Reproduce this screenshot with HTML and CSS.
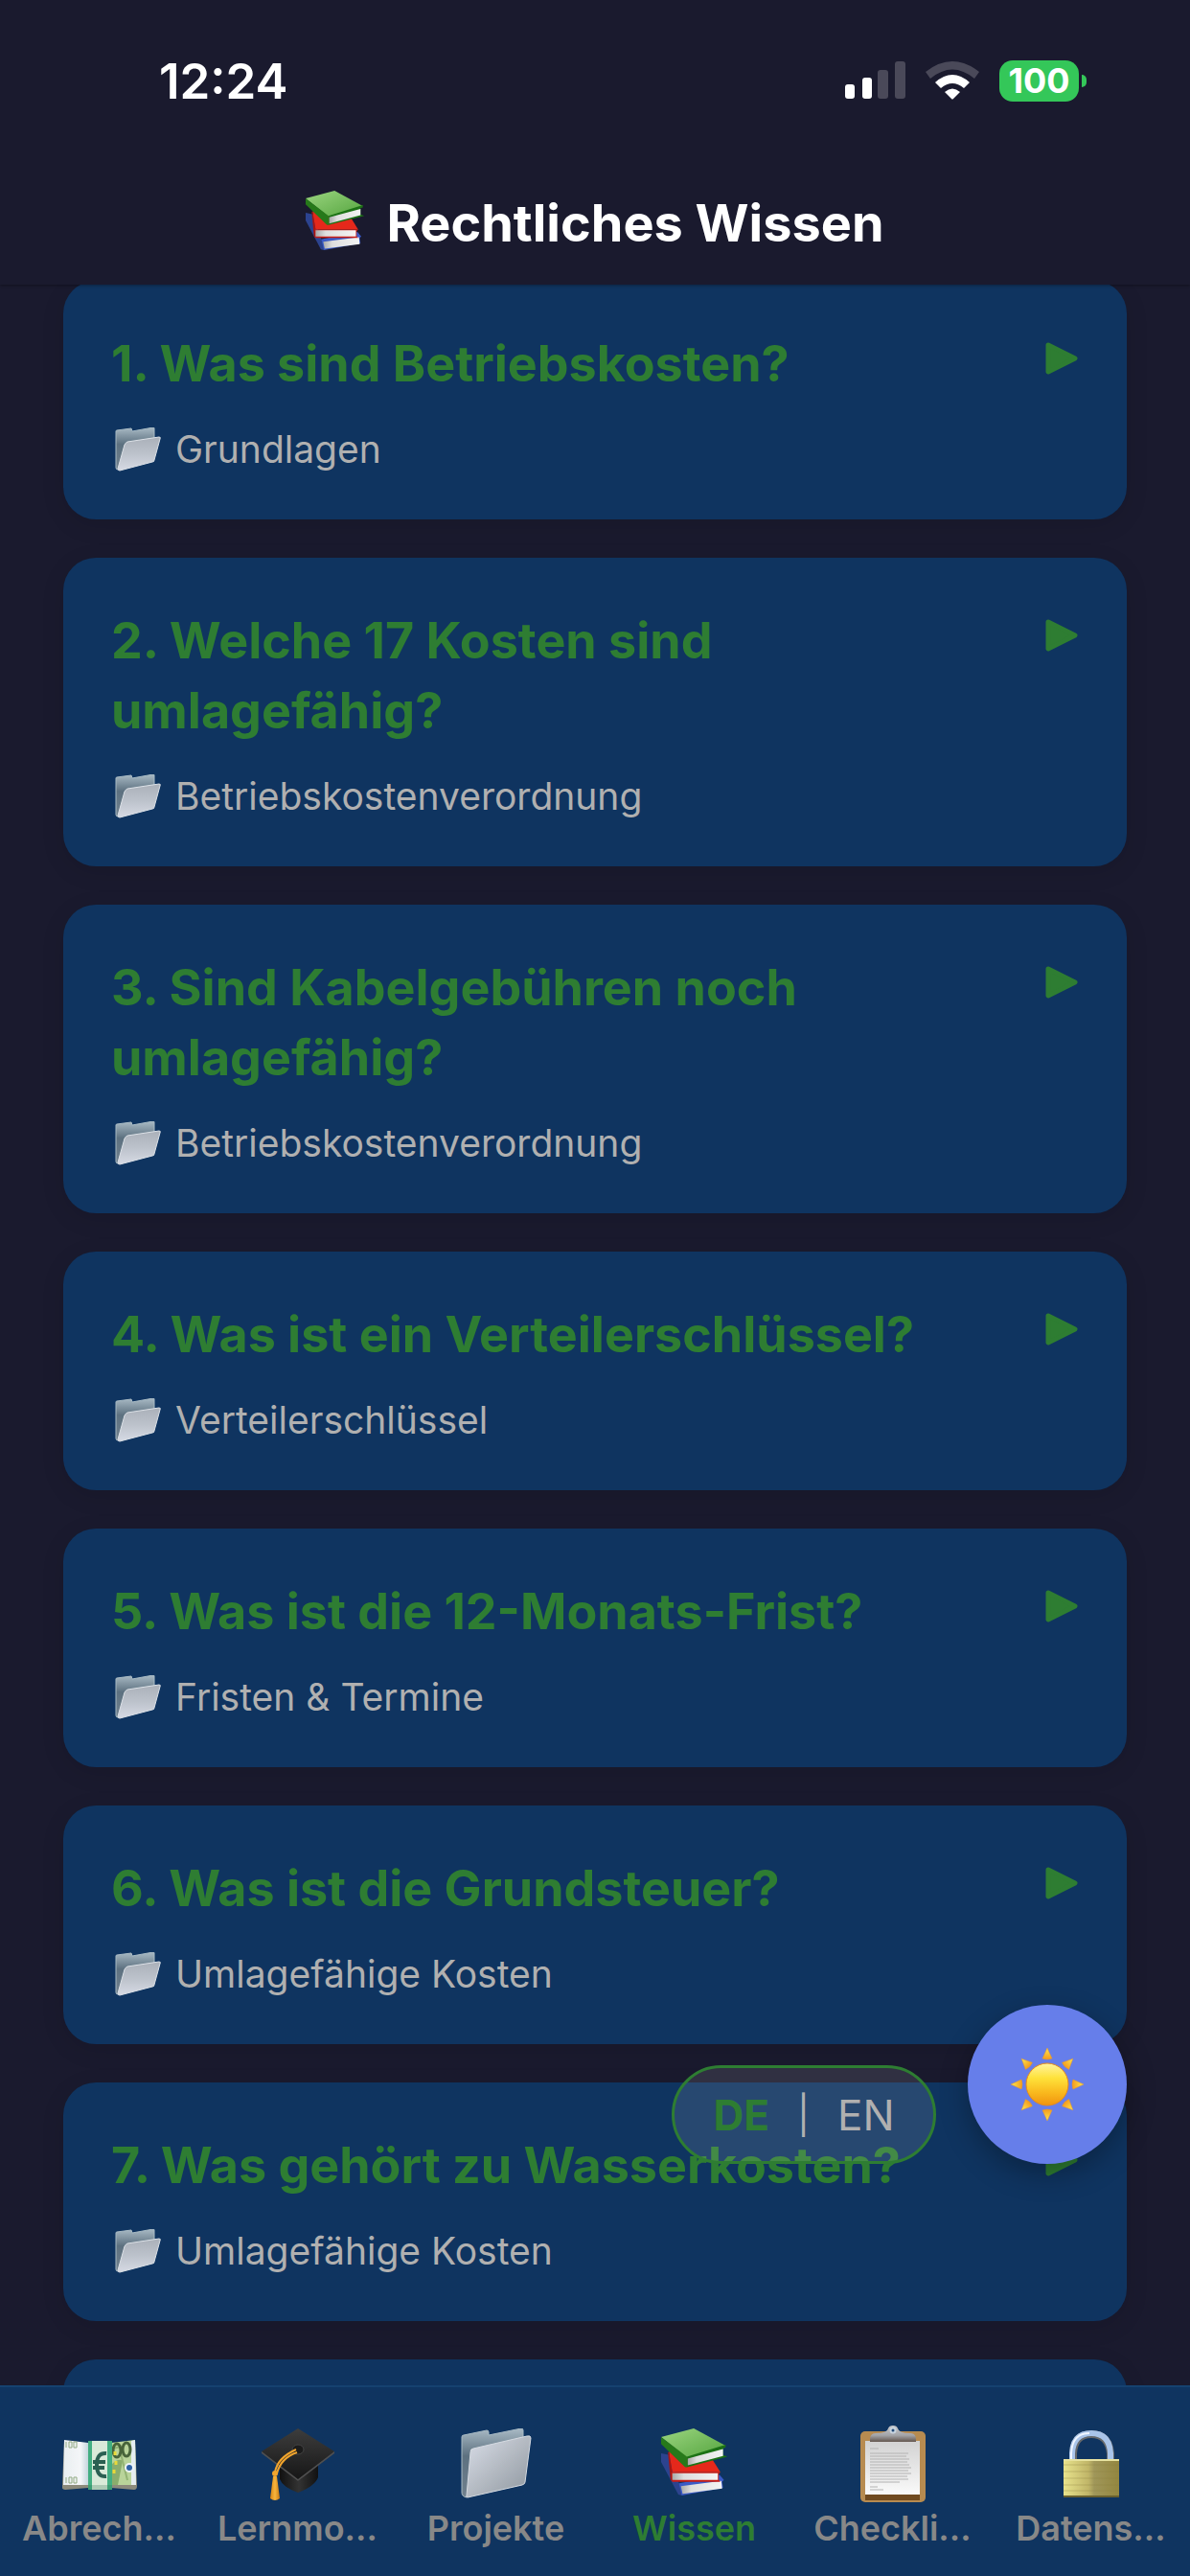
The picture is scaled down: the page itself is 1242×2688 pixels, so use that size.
FILE: index.html
```html
<!DOCTYPE html>
<html lang="de">
<head>
<meta charset="utf-8">
<meta name="viewport" content="width=device-width, initial-scale=1">
<title>Rechtliches Wissen</title>
<link rel="stylesheet" href="styles.css">
</head>
<body>
<svg class="sprite" width="0" height="0" aria-hidden="true">
  <defs>
    <linearGradient id="g-green" x1="0" y1="0" x2="1" y2="1"><stop offset="0" stop-color="#9bd580"/><stop offset="1" stop-color="#55a53f"/></linearGradient>
    <linearGradient id="g-page" x1="0" y1="0" x2="1" y2="0"><stop offset="0" stop-color="#a9a9a9"/><stop offset=".25" stop-color="#dedede"/><stop offset="1" stop-color="#f4f4f4"/></linearGradient>
    <linearGradient id="g-front" x1="0" y1="0" x2="1" y2="1"><stop offset="0" stop-color="#d9dee9"/><stop offset=".5" stop-color="#b4bac2"/><stop offset="1" stop-color="#8d969f"/></linearGradient>
    <linearGradient id="g-open" x1="0" y1="0" x2="0" y2="1"><stop offset="0" stop-color="#aab0b9"/><stop offset=".5" stop-color="#bcc2cb"/><stop offset="1" stop-color="#d6dae4"/></linearGradient>
    <linearGradient id="g-back" x1="0" y1="0" x2="0" y2="1"><stop offset="0" stop-color="#a9bac5"/><stop offset=".4" stop-color="#5d7180"/><stop offset="1" stop-color="#71818e"/></linearGradient>
    <linearGradient id="g-sun" x1="0" y1="0" x2="0" y2="1"><stop offset="0" stop-color="#fff3a0"/><stop offset=".35" stop-color="#fee23a"/><stop offset=".7" stop-color="#f9b81d"/><stop offset="1" stop-color="#f0930f"/></linearGradient>
    <linearGradient id="g-ray" x1="0" y1="0" x2="0" y2="1"><stop offset="0" stop-color="#ffe94e"/><stop offset="1" stop-color="#f39a1d"/></linearGradient>
    <linearGradient id="g-cap" x1="0" y1="0" x2="0" y2="1"><stop offset="0" stop-color="#3d3d3d"/><stop offset="1" stop-color="#151515"/></linearGradient>
    <linearGradient id="g-base" x1="0" y1="0" x2="1" y2="0"><stop offset="0" stop-color="#111"/><stop offset=".5" stop-color="#333"/><stop offset="1" stop-color="#111"/></linearGradient>
    <linearGradient id="g-tassel" x1="0" y1="0" x2="1" y2="0"><stop offset="0" stop-color="#d98512"/><stop offset=".5" stop-color="#f7b53e"/><stop offset="1" stop-color="#c9780e"/></linearGradient>
    <linearGradient id="g-brass" x1="0" y1="0" x2="1" y2="0"><stop offset="0" stop-color="#e8e38c"/><stop offset=".45" stop-color="#c0b568"/><stop offset=".55" stop-color="#a0975a"/><stop offset="1" stop-color="#93863f"/></linearGradient>
    <linearGradient id="g-paper" x1="0" y1="0" x2="0" y2="1"><stop offset="0" stop-color="#d2d2d2"/><stop offset="1" stop-color="#fafafa"/></linearGradient>
    <linearGradient id="g-clip" x1="0" y1="0" x2="0" y2="1"><stop offset="0" stop-color="#c8cace"/><stop offset=".6" stop-color="#a3a4a8"/><stop offset="1" stop-color="#64564e"/></linearGradient>
    <linearGradient id="g-notes" x1="0" y1="0" x2="1" y2="0"><stop offset="0" stop-color="#e9eef0"/><stop offset=".7" stop-color="#f4f6f8"/><stop offset="1" stop-color="#c5d6dd"/></linearGradient>

    <symbol id="books" viewBox="0 0 78 78">
      <path d="M20 64l48-10 5 6-2 2 1 7-48 9-3-3z" fill="#3a5ac6"/>
      <path d="M0 29l10 2 11 34 3 13-4-1L0 39z" fill="#2c438f"/>
      <path d="M23 67l47-6 1 9-46 6z" fill="url(#g-page)"/>
      <path d="M9 27l50 8 10 16H13z" fill="#e5281b"/>
      <path d="M9 27l4 23v12l-2-2-3-32z" fill="#a81511"/>
      <path d="M12 51h57l-2 2v7l2 2H13z" fill="#c91c14"/>
      <path d="M13 52h53v8H13z" fill="url(#g-page)"/>
      <path d="M0 10L38 0l37 20-45 14z" fill="url(#g-green)"/>
      <path d="M0 10l30 23v12l-2 0L0 18z" fill="#26791a"/>
      <path d="M30 33l45-14v3l-3 1v8l5 2-47 12z" fill="#1c7215"/>
      <path d="M31 35l41-11v8L31 43z" fill="url(#g-page)"/>
    </symbol>
    <symbol id="folder-open" viewBox="0 0 48 46">
      <path d="M1 4Q1 3 2 3L17 1l1 3L40 0q1 0 1 1v28L3 44q-2 0-2-2z" fill="url(#g-back)" stroke="#a8bac4" stroke-width="1"/>
      <path d="M10 18q1-2 3-3l33-5q2 0 1 2l-6 22q0 2-2 2L5 45q-2 0-2-2z" fill="url(#g-open)" stroke="#dce1e7" stroke-width="1"/>
    </symbol>
    <symbol id="folder" viewBox="0 0 74 74">
      <path d="M1 9q0-2 2-2l24-5q2 0 2 2v3l34-7q2 0 2 2v8L6 72q-5-1-5-5z" fill="url(#g-back)" stroke="#a8bac4" stroke-width="1"/>
      <path d="M10 25q0-4 3-4L69 8q4-1 4 2l-6 46q0 2-3 3L7 72q-2 0-1-2z" fill="url(#g-front)" stroke="#d5dae1" stroke-width="1"/>
    </symbol>
    <symbol id="money" viewBox="0 0 78 54">
      <path d="M2 2l25 3h24l25-3 2 47q0 4-3 4l-24-2H27L3 53q-4 0-3-4z" fill="#8c8b7c"/>
      <path d="M2 1l25 3v44L1 48z" fill="url(#g-notes)"/>
      <path d="M51 4l25-3 1 47-26 0z" fill="#b9d49a"/>
      <path d="M72 2l4-1 1 47-5 0z" fill="#e5edf1"/>
      <path d="M51 27q8-8 12-4l-5 25h-7z" fill="#8aad6d"/>
      <path d="M53 10l8-2M61 15l7 28" stroke="#93b374" stroke-width="2"/>
      <ellipse cx="57" cy="12" rx="4" ry="7" fill="none" stroke="#48643a" stroke-width="3"/>
      <ellipse cx="67" cy="11" rx="4" ry="7" fill="none" stroke="#48643a" stroke-width="3"/>
      <circle cx="70" cy="30" r="5" fill="#edf3f7"/><circle cx="70" cy="30" r="3" fill="#2e62a5"/>
      <path d="M55 13v4M56 23v4M54 32v4" stroke="#e8d93a" stroke-width="3"/>
      <path d="M4 3v6M7 3h3v6H7zM12 3h3v6h-3zM4 40v6M7 40h3v6H7zM12 40h3v6h-3z" fill="none" stroke="#91aa83" stroke-width="1"/>
      <path d="M27 2h25v51H27z" fill="#43ae82"/><path d="M31 2h16v51H31z" fill="#d9ead9"/><path d="M27 48h25v5H27z" fill="#276b4a" opacity=".25"/>
      <path d="M46 15q-10-1-10 12t10 12M32 24h13M32 30h12" fill="none" stroke="#2b6052" stroke-width="4"/>
    </symbol>
    <symbol id="cap" viewBox="0 0 78 78">
      <path d="M20 40l19 15 21-16v13q-3 9-21 16-16-6-19-14z" fill="url(#g-base)"/>
      <path d="M39 1l38 24-38 31L1 25z" fill="url(#g-cap)"/>
      <path d="M1 25l38 29 38-29v2L39 56 1 27z" fill="#505050"/>
      <ellipse cx="39" cy="23" rx="6" ry="5" fill="#1b1b1b" stroke="#444"/>
      <path d="M37 23Q17 32 15 47M38 26Q21 32 17 48" fill="none" stroke="#f2a52d" stroke-width="2"/>
      <circle cx="15" cy="48" r="3" fill="#f2a52d"/>
      <path d="M13 51h4l3 23q-5 4-10 0z" fill="url(#g-tassel)"/>
    </symbol>
    <symbol id="clipboard" viewBox="0 0 68 80">
      <rect x="0" y="6" width="68" height="74" rx="5" fill="#b78b50"/>
      <path d="M5 68h57v10H5z" fill="#704a20"/>
      <path d="M5 16h57v56H5z" fill="url(#g-paper)"/>
      <path d="M10 24h9M10 29h40M10 32h38M10 35h41M10 38h39M10 41h41M10 44h43M10 47h40M10 50h43M10 53h39M10 56h40M10 59h31M10 64h8M10 67h14" stroke="#b2b2b2" stroke-width="1"/>
      <path d="M10 15q0-7 6-7 12 0 13-5 1-3 5-3t5 3q1 5 13 5 6 0 6 7v2H10z" fill="url(#g-clip)"/>
      <circle cx="34" cy="5" r="2.500" fill="#254c78" stroke="#c8d4df" stroke-width="2"/>
    </symbol>
    <symbol id="lock" viewBox="0 0 58 70">
      <path d="M10 32V24Q11 4 29 4t20 20v8" fill="none" stroke="#66696b" stroke-width="8"/>
      <path d="M9 31V24Q10 3 29 3t20 21v7" fill="none" stroke="#a9c4e9" stroke-width="6"/>
      <path d="M8 31V24Q9 3 27 3" fill="none" stroke="#f0f6ff" stroke-width="2"/>
      <path d="M0 30h58v40H0z" fill="url(#g-brass)"/>
      <path d="M0 36h58M0 43h58M0 50h58M0 57h58M0 63h58" stroke="#8c8040" stroke-width="1" opacity=".35"/>
      <path d="M0 30h58v2H0z" fill="#e8e3a0"/><path d="M0 68h58v2H0z" fill="#69602e"/>
    </symbol>
    <symbol id="sun" viewBox="0 0 76 76">
      <g fill="url(#g-ray)" stroke="#e5962c" stroke-width=".5">
        <path id="ray" d="M38 0l5 11q-5 2-10 0z"/>
        <use href="#ray" transform="rotate(45 38 38)"/><use href="#ray" transform="rotate(90 38 38)"/><use href="#ray" transform="rotate(135 38 38)"/>
        <use href="#ray" transform="rotate(180 38 38)"/><use href="#ray" transform="rotate(225 38 38)"/><use href="#ray" transform="rotate(270 38 38)"/><use href="#ray" transform="rotate(315 38 38)"/>
      </g>
      <circle cx="38" cy="38" r="22" fill="url(#g-sun)" stroke="#e98a17" stroke-width="1"/>
    </symbol>
    <symbol id="play" viewBox="0 0 36 36">
      <path d="M4 4L32 18 4 32z" fill="#2e7d32" stroke="#2e7d32" stroke-width="5" stroke-linejoin="round"/>
    </symbol>
  </defs>
</svg>

<div class="app">
  <header class="header">
    <div class="status">
      <span class="clock">12:24</span>
      <div class="indicators">
        <svg class="signal" viewBox="0 0 63 40" aria-hidden="true"><rect x="0" y="24" width="10" height="15" rx="3" fill="#fff"/><rect x="18" y="17" width="10" height="22" rx="3" fill="#fff"/><rect x="34" y="9" width="11" height="30" rx="3" fill="#4a4959"/><rect x="52" y="0" width="11" height="39" rx="3" fill="#4a4959"/></svg>
        <svg class="wifi" viewBox="0 0 56 40" aria-hidden="true"><path d="M0 11Q28-11 56 11l-5 7Q28-1 5 18z" fill="#4a4959"/><path d="M10 22Q28 6 46 22l-6 6Q28 18 16 28z" fill="#fff"/><path d="M20 32q8-7 16 0l-7 7q-1 1-2 0z" fill="#fff"/></svg>
        <span class="battery">100</span>
      </div>
    </div>
    <h1 class="title"><svg class="title-icon" aria-hidden="true"><use href="#books"/></svg>Rechtliches Wissen</h1>
  </header>

  <main class="content">
    <div class="list">
      <button class="card" type="button"><span class="card-head"><span class="question">1. Was sind Betriebskosten?</span><svg class="arrow" aria-hidden="true"><use href="#play"/></svg></span><span class="category"><svg class="category-icon" aria-hidden="true"><use href="#folder-open"/></svg>Grundlagen</span></button>
      <button class="card" type="button"><span class="card-head"><span class="question">2. Welche 17 Kosten sind umlagefähig?</span><svg class="arrow" aria-hidden="true"><use href="#play"/></svg></span><span class="category"><svg class="category-icon" aria-hidden="true"><use href="#folder-open"/></svg>Betriebskostenverordnung</span></button>
      <button class="card" type="button"><span class="card-head"><span class="question">3. Sind Kabelgebühren noch umlagefähig?</span><svg class="arrow" aria-hidden="true"><use href="#play"/></svg></span><span class="category"><svg class="category-icon" aria-hidden="true"><use href="#folder-open"/></svg>Betriebskostenverordnung</span></button>
      <button class="card" type="button"><span class="card-head"><span class="question">4. Was ist ein Verteilerschlüssel?</span><svg class="arrow" aria-hidden="true"><use href="#play"/></svg></span><span class="category"><svg class="category-icon" aria-hidden="true"><use href="#folder-open"/></svg>Verteilerschlüssel</span></button>
      <button class="card" type="button"><span class="card-head"><span class="question">5. Was ist die 12-Monats-Frist?</span><svg class="arrow" aria-hidden="true"><use href="#play"/></svg></span><span class="category"><svg class="category-icon" aria-hidden="true"><use href="#folder-open"/></svg>Fristen &amp; Termine</span></button>
      <button class="card" type="button"><span class="card-head"><span class="question">6. Was ist die Grundsteuer?</span><svg class="arrow" aria-hidden="true"><use href="#play"/></svg></span><span class="category"><svg class="category-icon" aria-hidden="true"><use href="#folder-open"/></svg>Umlagefähige Kosten</span></button>
      <button class="card" type="button"><span class="card-head"><span class="question">7. Was gehört zu Wasserkosten?</span><svg class="arrow" aria-hidden="true"><use href="#play"/></svg></span><span class="category"><svg class="category-icon" aria-hidden="true"><use href="#folder-open"/></svg>Umlagefähige Kosten</span></button>
      <div class="card"></div>
    </div>
    <div class="floating">
      <button class="language" type="button"><span class="language-active">DE</span><span class="language-divider">|</span><span>EN</span></button>
      <button class="theme" type="button"><svg class="sun" aria-hidden="true"><use href="#sun"/></svg></button>
    </div>
  </main>

  <nav class="tabs">
    <a class="tab" href="#"><svg class="tab-icon" aria-hidden="true"><use href="#money" x="1" y="14" width="78" height="54"/></svg><span>Abrech…</span></a>
    <a class="tab" href="#"><svg class="tab-icon" aria-hidden="true"><use href="#cap" x="1" y="2" width="78" height="78"/></svg><span>Lernmo…</span></a>
    <a class="tab" href="#"><svg class="tab-icon" aria-hidden="true"><use href="#folder" x="3" y="3" width="74" height="74"/></svg><span>Projekte</span></a>
    <a class="tab tab-active" href="#"><svg class="tab-icon" aria-hidden="true"><use href="#books" x="5" y="3" width="70" height="70"/></svg><span>Wissen</span></a>
    <a class="tab" href="#"><svg class="tab-icon" aria-hidden="true"><use href="#clipboard" x="6" y="0" width="68" height="80"/></svg><span>Checkli…</span></a>
    <a class="tab" href="#"><svg class="tab-icon" aria-hidden="true"><use href="#lock" x="11" y="5" width="58" height="70"/></svg><span>Datens…</span></a>
  </nav>
</div>
</body>
</html>
```
FILE: styles.css
```css
* { box-sizing: border-box; }

body {
  margin: 0;
  background: #1a1a2e;
  color: #fff;
  font-family: Inter, "Liberation Sans", sans-serif;
}

button {
  border: 0;
  padding: 0;
  font: inherit;
  color: inherit;
}

.sprite { position: absolute; }

.app {
  display: flex;
  flex-direction: column;
  height: 100vh;
}

.header {
  position: relative;
  z-index: 1;
  background: #1a1a2e;
  box-shadow: 0 1px 3px rgba(0, 0, 0, .35);
}

.status {
  display: flex;
  justify-content: space-between;
  align-items: center;
  padding: 52px 108px 0 166px;
  height: 116px;
}

.clock {
  font-size: 51px;
  font-weight: 600;
}

.indicators {
  display: flex;
  align-items: center;
  gap: 21px;
}

.signal { width: 63px; height: 40px; }
.wifi { width: 56px; height: 40px; }

.battery {
  position: relative;
  width: 83px;
  margin-right: 8px;
  border-radius: 14px;
  background: #34c759;
  font-size: 36px;
  font-weight: 700;
  line-height: 43px;
  text-align: center;
}

.battery::after {
  content: "";
  position: absolute;
  top: 15px;
  right: -8px;
  width: 5px;
  height: 13px;
  border-radius: 0 5px 5px 0;
  background: #34c759;
}

.title {
  display: flex;
  justify-content: center;
  align-items: center;
  gap: 22px;
  margin: 0;
  padding: 81px 0 28px;
  font-size: 54px;
  font-weight: 700;
  line-height: 72px;
}

.title-icon {
  width: 62px;
  height: 62px;
  margin-bottom: 6px;
}

.content {
  position: relative;
  flex: 1;
  min-height: 0;
  overflow: hidden;
}

.list {
  display: flex;
  flex-direction: column;
  gap: 40px;
  margin-top: -4px;
  padding: 0 66px;
}

.card {
  display: flex;
  flex-direction: column;
  flex: none;
  gap: 29px;
  min-height: 249px;
  padding: 50px 50px 49px;
  border-radius: 34px;
  background: #0f3460;
  box-shadow: 0 6px 24px rgba(0, 0, 0, .1);
  text-align: left;
}

.card-head {
  display: flex;
  justify-content: space-between;
  align-items: flex-start;
  width: 100%;
}

.question {
  max-width: 880px;
  color: #2e7d32;
  font-size: 52px;
  font-weight: 700;
  line-height: 73px;
}

.arrow {
  flex: none;
  width: 36px;
  height: 36px;
  margin-top: 13px;
}

.category {
  display: flex;
  align-items: center;
  gap: 15px;
  padding-left: 4px;
  color: #b0b0b0;
  font-size: 39px;
  line-height: 48px;
}

.category-icon { width: 48px; height: 46px; }

.floating {
  position: absolute;
  right: 66px;
  bottom: 231px;
  display: flex;
  align-items: flex-end;
  gap: 33px;
}

.language {
  display: flex;
  justify-content: center;
  align-items: center;
  gap: 29px;
  width: 276px;
  height: 103px;
  border: 3px solid #2e7d32;
  border-radius: 52px;
  background: rgba(255, 255, 255, .1);
  color: #b0b0b0;
  font-size: 44px;
}

.language-active {
  color: #2e7d32;
  font-weight: 700;
}

.language-divider { font-size: 39px; }

.theme {
  display: flex;
  justify-content: center;
  align-items: center;
  width: 166px;
  height: 166px;
  border-radius: 50%;
  background: #667eea;
  box-shadow: 0 10px 30px rgba(0, 0, 0, .3);
}

.sun { width: 76px; height: 76px; }

.tabs {
  position: relative;
  display: grid;
  grid-template-columns: repeat(6, 1fr);
  padding: 40px 0 26px;
  border-top: 2px solid #154270;
  background: #0f3460;
}

.tab {
  display: flex;
  flex-direction: column;
  align-items: center;
  gap: 4px;
  color: #888;
  font-size: 36px;
  font-weight: 600;
  line-height: 47px;
  text-decoration: none;
}

.tab-active { color: #2e7d32; }

.tab-icon { width: 80px; height: 80px; }
```
